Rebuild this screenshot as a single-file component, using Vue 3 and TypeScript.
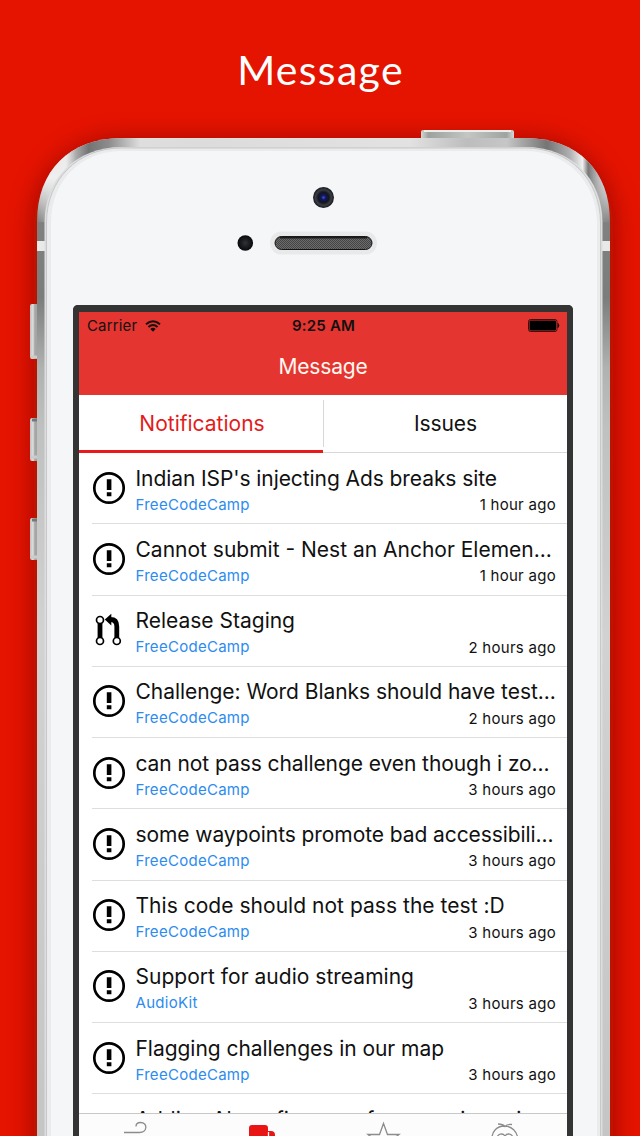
<script setup lang="ts">
interface Notice {
  title: string
  repo: string
  time: string
  kind: 'issue' | 'pull'
  spacing: number
}

const notices: Notice[] = [
  { title: "Indian ISP's injecting Ads breaks site", repo: 'FreeCodeCamp', time: '1 hour ago', kind: 'issue', spacing: -0.08 },
  { title: 'Cannot submit - Nest an Anchor Elemen...', repo: 'FreeCodeCamp', time: '1 hour ago', kind: 'issue', spacing: 0 },
  { title: 'Release Staging', repo: 'FreeCodeCamp', time: '2 hours ago', kind: 'pull', spacing: 0 },
  { title: 'Challenge: Word Blanks should have test...', repo: 'FreeCodeCamp', time: '2 hours ago', kind: 'issue', spacing: -0.05 },
  { title: 'can not pass challenge even though i zo...', repo: 'FreeCodeCamp', time: '3 hours ago', kind: 'issue', spacing: -0.08 },
  { title: 'some waypoints promote bad accessibili...', repo: 'FreeCodeCamp', time: '3 hours ago', kind: 'issue', spacing: -0.08 },
  { title: 'This code should not pass the test :D', repo: 'FreeCodeCamp', time: '3 hours ago', kind: 'issue', spacing: 0.03 },
  { title: 'Support for audio streaming', repo: 'AudioKit', time: '3 hours ago', kind: 'issue', spacing: 0.02 },
  { title: 'Flagging challenges in our map', repo: 'FreeCodeCamp', time: '3 hours ago', kind: 'issue', spacing: -0.04 },
  { title: 'Adding Alarm fixes are for some inner i...', repo: '', time: '', kind: 'issue', spacing: 0 },
]
</script>

<template>
  <main class="page">
    <svg class="device" width="640" height="1136" viewBox="0 0 640 1136" aria-hidden="true">
      <defs>
        <linearGradient id="side" x1="0" y1="138" x2="0" y2="1136" gradientUnits="userSpaceOnUse">
          <stop offset="0" stop-color="#d8d8d8" />
          <stop offset=".04" stop-color="#f0f0f0" />
          <stop offset=".06" stop-color="#c4c4c4" />
          <stop offset=".085" stop-color="#808080" />
          <stop offset=".16" stop-color="#7b7d7d" />
          <stop offset=".23" stop-color="#b0b1b1" />
          <stop offset=".29" stop-color="#bfc0c0" />
          <stop offset=".5" stop-color="#d2d2d2" />
          <stop offset="1" stop-color="#c5c5c5" />
        </linearGradient>
        <linearGradient id="topEdge" x1="37" y1="0" x2="610" y2="0" gradientUnits="userSpaceOnUse">
          <stop offset="0" stop-color="#eee" stop-opacity="0" />
          <stop offset=".05" stop-color="#eee" stop-opacity=".75" />
          <stop offset=".068" stop-color="#aaa" />
          <stop offset=".09" stop-color="#747474" />
          <stop offset=".125" stop-color="#8c8c8c" />
          <stop offset=".18" stop-color="#dedede" />
          <stop offset=".28" stop-color="#dcdcdc" />
          <stop offset=".65" stop-color="#e2e2e2" />
          <stop offset=".75" stop-color="#bdbdbd" />
          <stop offset=".82" stop-color="#c6c6c6" />
          <stop offset=".89" stop-color="#747474" />
          <stop offset=".93" stop-color="#b0b0b0" />
          <stop offset=".952" stop-color="#f0f0f0" />
          <stop offset=".962" stop-color="#777" />
          <stop offset="1" stop-color="#aaa" stop-opacity="0" />
        </linearGradient>
        <linearGradient id="key" x1="0" x2="1" y1="0" y2="0">
          <stop offset="0" stop-color="#bfc0bf" />
          <stop offset=".25" stop-color="#dddedd" />
          <stop offset=".4" stop-color="#a6a8a7" />
          <stop offset="1" stop-color="#9b9d9c" />
        </linearGradient>
        <linearGradient id="power" x1="0" x2="1" y1="0" y2="0">
          <stop offset="0" stop-color="#d5d8d5" />
          <stop offset=".08" stop-color="#9da29e" />
          <stop offset=".5" stop-color="#c3c6c3" />
          <stop offset=".92" stop-color="#a0a4a1" />
          <stop offset="1" stop-color="#d5d8d5" />
        </linearGradient>
        <radialGradient id="lens">
          <stop offset="0" stop-color="#2438a8" />
          <stop offset=".25" stop-color="#12165c" />
          <stop offset=".5" stop-color="#15161e" />
          <stop offset=".75" stop-color="#3a3d44" />
          <stop offset="1" stop-color="#14161a" />
        </radialGradient>
        <radialGradient id="dot">
          <stop offset="0" stop-color="#303236" />
          <stop offset="1" stop-color="#08090b" />
        </radialGradient>
        <pattern id="mesh" width="2" height="2" patternUnits="userSpaceOnUse">
          <rect width="2" height="2" fill="#444" />
          <path d="M0 2 2 0" stroke="#7c7c7c" stroke-width=".7" />
        </pattern>
        <filter id="blur" x="-20%" y="-20%" width="140%" height="140%">
          <feGaussianBlur stdDeviation="13" />
        </filter>
      </defs>
      <rect x="34" y="140" width="579" height="1100" rx="84" fill="#7d0a00" opacity=".7" filter="url(#blur)" />
      <rect x="421" y="130" width="93" height="14" rx="2" fill="url(#power)" />
      <path d="M424 131h87" stroke="#eef0ee" stroke-width="2" />
      <g>
        <rect x="30" y="304" width="12" height="55" rx="2" fill="url(#key)" />
        <rect x="30" y="418" width="12" height="43" rx="2" fill="url(#key)" />
        <rect x="30" y="518" width="12" height="42" rx="2" fill="url(#key)" />
        <path d="M32 420h6M32 520h6" stroke="#777" stroke-width="3" />
        <path d="M31 457h7M31 557h7M31 357h7" stroke="#ccc" stroke-width="3" />
      </g>
      <path d="M37 1140V222C37 171 69 138 122 138H525C578 138 610 171 610 222V1140Z" fill="url(#side)" />
      <path d="M37 222C37 171 69 138 122 138H525C578 138 610 171 610 222Z" fill="url(#topEdge)" />
      <path d="M37 241h10v10H37ZM600 241h10v10H600Z" fill="#e9e9e9" />
      <path d="M44.5 1140V222C45 179 75 147 122 147H525C572 147 602 179 602.500 222V1140Z" fill="#dcdddd" />
      <path d="M46.500 1140V222C47 180 77 148 122 148H525C570 148 600 180 600.500 222V1140Z" fill="#e9ebec" stroke="#bcbcbc" stroke-width=".7" />
      <path d="M51 1140V222C51 182 80 151 122 151H525C567 151 596 182 597 222V1140Z" fill="#f5f6f8" />
      <circle cx="323.500" cy="197.500" r="10.500" fill="url(#lens)" />
      <circle cx="323.500" cy="197.500" r="1" fill="#3c56c8" />
      <circle cx="245.300" cy="243" r="7.800" fill="url(#dot)" />
      <rect x="270" y="231.500" width="107" height="23" rx="11.500" fill="#e8e9eb" />
      <rect x="275" y="236.500" width="97" height="13" rx="6.500" fill="url(#mesh)" stroke="#151515" />
      <path d="M280 237.500h87" stroke="#1c1c1c" stroke-width="2" />
    </svg>

    <h1 class="headline">Message</h1>

    <section class="screen">
      <header class="bar">
        <div class="status">
          <div class="carrier">
            <span>Carrier</span>
            <svg width="16" height="12" viewBox="0 0 16 12">
              <path d="M1 4.200Q8-1.800 15 4.200M3.400 7Q8 2.900 12.600 7" fill="none" stroke="#171010" stroke-width="2" />
              <path d="M5.300 9Q8 6.700 10.700 9L8 11.700Z" fill="#171010" />
            </svg>
          </div>
          <b class="clock">9:25 AM</b>
          <svg class="battery" width="32" height="13" viewBox="0 0 32 13">
            <rect x=".5" y=".5" width="28.500" height="12" rx="2" fill="none" stroke="#40100e" />
            <rect x="1.500" y="1.500" width="26.500" height="10" rx="1" fill="#000" />
            <path d="M30 4.500q1.800 2 0 4Z" fill="#000" stroke="#000" stroke-width=".7" />
          </svg>
        </div>
        <h2 class="bar-title">Message</h2>
      </header>

      <nav class="tabs">
        <div class="tab active"><span>Notifications</span></div>
        <div class="tab"><span>Issues</span></div>
      </nav>

      <div class="list">
        <article v-for="n in notices" :key="n.title" class="row">
          <div class="mark">
            <svg v-if="n.kind === 'issue'" width="34" height="34" viewBox="0 0 34 34">
              <circle cx="17" cy="17" r="14.700" fill="none" stroke="#000" stroke-width="2.700" />
              <path d="M14.800 8.200h4.600v10.800h-4.600ZM14.800 21.300h4.600v4h-4.600Z" />
            </svg>
            <svg v-else width="34" height="34" viewBox="0 0 34 34">
              <path d="M8 9.500V25M24.800 25V13.500Q24.800 6.500 18.500 6.500" fill="none" stroke="#000" stroke-width="4.800" />
              <path d="M12.800 6.500 19.300.8V12.500Z" />
              <g fill="#fff" stroke="#000" stroke-width="1.700">
                <circle cx="8" cy="7" r="3.500" />
                <circle cx="8" cy="28" r="3.500" />
                <circle cx="24.800" cy="28" r="3.500" />
              </g>
            </svg>
          </div>
          <div class="body">
            <h3 class="title" :style="{ letterSpacing: n.spacing + 'px' }">{{ n.title }}</h3>
            <div class="meta">
              <span class="repo">{{ n.repo }}</span>
              <span class="time">{{ n.time }}</span>
            </div>
          </div>
        </article>
      </div>

      <footer class="dock">
        <svg width="488" height="36" viewBox="0 0 488 36" fill="none" stroke="#8c8c8c" stroke-width="1.300">
          <path d="M45 18.500h15.500c8 0 8.500-10 1-10-3 0-4.500 2-4.500 4M41 24.500h29" />
          <path d="M173 11h13q3 0 3 3v3h3q4 0 4 4v12h-26V14q0-3 3-3Z" fill="#e91414" stroke="none" />
          <path d="M189.500 18v15" stroke="#fff" />
          <path d="m304.500 9.500 4 11h11.500l-9 7 3.500 11-10-7-10 7 3.500-11-9-7h11.500Z" />
          <path d="M413 27c-2-20 26-20 26 0M418 25c0-6 6-6 8-3 2-3 8-3 8 3M419 10q5 0 7 2.500 2-2.500 7-2" />
        </svg>
      </footer>
    </section>
  </main>
</template>

<style>
body {
  margin: 0;
}
</style>

<style scoped>
.page {
  position: relative;
  display: flex;
  flex-direction: column;
  align-items: center;
  width: 640px;
  height: 1136px;
  overflow: hidden;
  background: #e51400;
  font-family: Inter, "Liberation Sans", sans-serif;
  color: #111;
}
.device {
  position: absolute;
  inset: 0;
}
.headline {
  position: relative;
  height: 305px;
  margin: 0;
  padding: 45px 0 0 1px;
  box-sizing: border-box;
  font: 400 41px/50px Lato, sans-serif;
  letter-spacing: 1.3px;
  color: #fff;
}
.screen {
  position: relative;
  display: flex;
  flex-direction: column;
  box-sizing: border-box;
  width: 500px;
  height: 831px;
  margin-left: 6px;
  border: 6px solid #343434;
  border-top-width: 7px;
  border-bottom: 0;
  border-radius: 5px 5px 0 0;
  background: #fff;
}
.bar {
  flex: none;
  height: 83px;
  background: #e53530;
}
.status {
  display: grid;
  grid-template-columns: 1fr auto 1fr;
  align-items: center;
  height: 27px;
  padding: 0 7px 0 8px;
  font-size: 15px;
}
.carrier {
  display: flex;
  align-items: center;
  gap: 8px;
  letter-spacing: 0.15px;
}
.clock {
  font-weight: 600;
  letter-spacing: 0.2px;
}
.battery {
  justify-self: end;
}
.bar-title {
  margin: 0;
  padding-top: 12px;
  font-size: 21px;
  font-weight: 400;
  line-height: 32px;
  letter-spacing: -0.15px;
  text-align: center;
  color: #fff8f0;
}
.tabs {
  flex: none;
  display: grid;
  grid-template-columns: 244px 1fr;
  height: 58px;
  box-sizing: border-box;
}
.tab {
  display: flex;
  align-items: center;
  justify-content: center;
  box-sizing: border-box;
  border-bottom: 1px solid #d8d8da;
  font-size: 21px;
}
.tab:not(.active) span {
  display: block;
  width: 100%;
  border-left: 1.5px solid #d8d8d8;
  line-height: 47px;
  letter-spacing: -0.1px;
  text-align: center;
}
.tab.active {
  border-bottom: 3px solid #e91a1a;
  color: #e31b1b;
}
.tab.active span {
  padding: 1px 0 0 2px;
}
.list {
  flex: 1;
  min-height: 0;
  overflow: hidden;
}
.row {
  display: flex;
  height: 71.25px;
  padding-left: 13px;
  background: linear-gradient(#dedede, #dedede) 13px 100% / 100% 1px no-repeat;
}
.mark {
  flex: none;
  width: 43.5px;
  padding-top: 17.7px;
}
.mark svg {
  display: block;
}
.body {
  flex: 1;
  min-width: 0;
  padding-right: 11px;
}
.title {
  margin: 0;
  padding-top: 10.5px;
  font-size: 21px;
  font-weight: 400;
  line-height: 30px;
  white-space: nowrap;
}
.meta {
  display: flex;
  justify-content: space-between;
  font-size: 15px;
  line-height: 22px;
  letter-spacing: 0.28px;
}
.time {
  padding-top: 0.6px;
}
.repo {
  color: #2c8bf0;
}
.dock {
  flex: none;
  height: 23px;
  box-sizing: border-box;
  overflow: hidden;
  border-top: 1px solid #c8c8c8;
  background: #fcfcfc;
}
.dock svg {
  display: block;
}
</style>
